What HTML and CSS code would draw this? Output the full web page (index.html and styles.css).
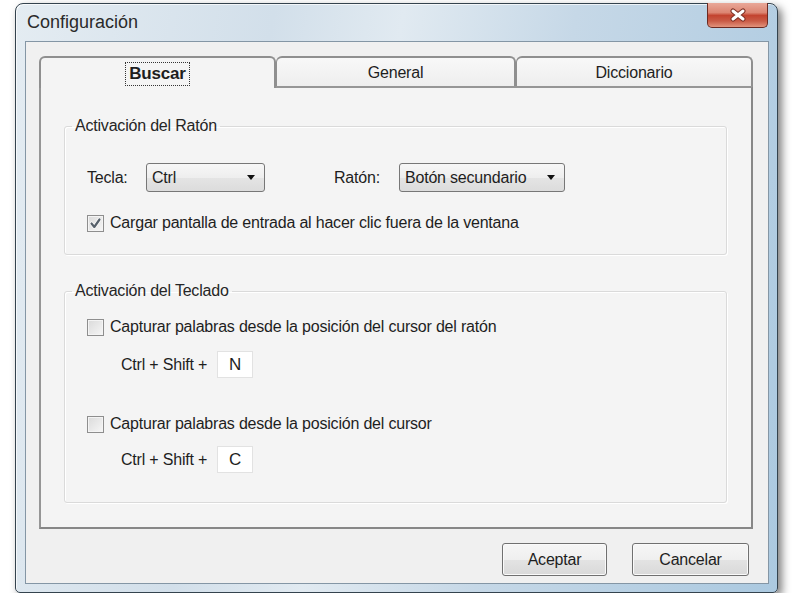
FILE: index.html
```html
<!DOCTYPE html>
<html lang="es">
<head>
    <meta charset="UTF-8">
    <meta name="viewport" content="width=device-width, initial-scale=1.0">
    <title>Configuración</title>
    <link rel="stylesheet" href="styles.css">
</head>
<body>
    <div class="window">
        <div class="titlebar">
            <span class="title">Configuración</span>
            <button class="close-btn" aria-label="Cerrar">
                <svg width="20" height="14" viewBox="-10 -7 20 14">
                    <path d="M-5 -4 L5 4 M5 -4 L-5 4" stroke="#7d3024" stroke-width="5" stroke-linecap="round"/>
                    <path d="M-5 -4 L5 4 M5 -4 L-5 4" stroke="#ffffff" stroke-width="3" stroke-linecap="round"/>
                </svg>
            </button>
        </div>
        <div class="client">
            <div class="tabs">
                <div class="tab active"><span class="focus">Buscar</span></div>
                <div class="tab tab-general">General</div>
                <div class="tab tab-dict">Diccionario</div>
            </div>
            <div class="tab-panel">
                <fieldset class="group">
                    <legend>Activación del Ratón</legend>
                    <div class="group-body mouse-body">
                        <div class="combo-row">
                            <label class="combo-label label-key">Tecla:</label>
                            <div class="combo combo-key"><span>Ctrl</span><i class="arrow"></i></div>
                            <label class="combo-label label-mouse">Ratón:</label>
                            <div class="combo combo-mouse"><span>Botón secundario</span><i class="arrow"></i></div>
                        </div>
                        <div class="check-row first-check">
                            <span class="check">
                                <svg width="15" height="15" viewBox="0 0 15 15">
                                    <path d="M3.5 7.5 L6.3 11 L11.5 3.5" fill="none" stroke="#ffffff" stroke-width="3.6" stroke-linecap="round" stroke-linejoin="round"/>
                                    <path d="M3.5 7.5 L6.3 11 L11.5 3.5" fill="none" stroke="#56606a" stroke-width="2.2" stroke-linecap="round" stroke-linejoin="round"/>
                                </svg>
                            </span>
                            <span>Cargar pantalla de entrada al hacer clic fuera de la ventana</span>
                        </div>
                    </div>
                </fieldset>

                <fieldset class="group group-keyboard">
                    <legend>Activación del Teclado</legend>
                    <div class="group-body keyboard-body">
                        <div class="check-row">
                            <span class="check"></span>
                            <span>Capturar palabras desde la posición del cursor del ratón</span>
                        </div>
                        <div class="key-row">
                            <span>Ctrl + Shift +</span>
                            <span class="key-box">N</span>
                        </div>
                        <div class="check-row second-check">
                            <span class="check"></span>
                            <span>Capturar palabras desde la posición del cursor</span>
                        </div>
                        <div class="key-row last-key">
                            <span>Ctrl + Shift +</span>
                            <span class="key-box">C</span>
                        </div>
                    </div>
                </fieldset>
            </div>
            <div class="buttons">
                <button class="btn btn-ok">Aceptar</button>
                <button class="btn btn-cancel">Cancelar</button>
            </div>
        </div>
    </div>
</body>
</html>
```

FILE: styles.css
```css
body {
    margin: 0;
    background-color: #ffffff;
    font-family: 'Liberation Sans', Arial, sans-serif;
    font-size: 16px;
    letter-spacing: -0.2px;
    color: #1e1e1e;
}
.window {
    position: relative;
    box-sizing: border-box;
    width: 763px;
    height: 590px;
    margin: 3px 0 0 15px;
    padding: 0 8px 8px 9px;
    border: 1px solid #34434e;
    border-radius: 8px 8px 5px 5px;
    background: linear-gradient(100deg, #e4ecf2 0%, #d2dfea 30%, #e1eaf1 45%, #c6d8e7 65%, #abc9e0 100%);
    box-shadow: 4px 4px 9px rgba(0, 0, 0, 0.5), inset 1px 1px 0 rgba(255, 255, 255, 0.7);
    display: flex;
    flex-direction: column;
}
.titlebar {
    height: 37px;
    display: flex;
    align-items: center;
    padding-left: 2px;
}
.title {
    font-size: 18px;
    letter-spacing: 0;
    color: #2a2a2a;
}
.close-btn {
    position: absolute;
    top: -1px;
    right: 9px;
    width: 61px;
    height: 25px;
    padding: 0;
    border: 1px solid #6b2a22;
    border-top: none;
    border-radius: 0 0 5px 5px;
    background: linear-gradient(#e9a899 0%, #dc8572 40%, #c3432f 52%, #c95b46 75%, #e2937c 100%);
    display: flex;
    align-items: center;
    justify-content: center;
}
.client {
    flex: 1;
    border: 1px solid #8496a5;
    background-color: #f0f0f0;
    padding: 14px 15px 0 13px;
    display: flex;
    flex-direction: column;
}
.tabs {
    display: flex;
    height: 30px;
}
.tab {
    box-sizing: border-box;
    height: 30px;
    border: 2px solid #8f8f8f;
    border-bottom: none;
    border-radius: 6px 6px 0 0;
    background: linear-gradient(#f8f8f8, #eeeeee);
    display: flex;
    align-items: center;
    justify-content: center;
    padding-top: 2px;
}
.tab.active {
    width: 237px;
    height: 32px;
    margin-bottom: -2px;
    position: relative;
    z-index: 1;
    background: #f4f4f4;
}
.tab-general {
    width: 240px;
    border-left-width: 1px;
}
.tab-dict {
    width: 237px;
    border-left-width: 1px;
}
.focus {
    font-weight: bold;
    font-size: 17px;
    padding: 0 2px;
    outline: 1px dotted #333333;
    outline-offset: 1px;
}
.tab-panel {
    box-sizing: border-box;
    width: 714px;
    height: 443px;
    border: 2px solid #969696;
    border-right-color: #878787;
    border-bottom-color: #878787;
    background-color: #f4f4f4;
    padding: 29px 24px 0 23px;
}
.group {
    margin: 0;
    padding: 0;
    border: 1px solid #dadada;
    border-radius: 3px;
    box-shadow: inset 1px 1px 0 #ffffff, 1px 1px 0 #ffffff;
    min-inline-size: auto;
}
.group legend {
    margin-left: 7px;
    padding: 0 3px;
    line-height: 18px;
    color: #262626;
}
.group-keyboard {
    margin-top: 27px;
}
.group-body {
    padding-left: 22px;
}
.mouse-body {
    padding-top: 28px;
    padding-bottom: 21px;
}
.keyboard-body {
    padding-top: 17px;
    padding-bottom: 29px;
}
.combo-row {
    display: flex;
    align-items: center;
    height: 29px;
}
.label-key {
    width: 59px;
}
.label-mouse {
    width: 65px;
    margin-left: 69px;
}
.combo {
    box-sizing: border-box;
    height: 29px;
    border: 1px solid #777777;
    border-radius: 3px;
    background: linear-gradient(#f7f7f7 0%, #eeeeee 50%, #e4e4e4 52%, #dcdcdc 100%);
    display: flex;
    align-items: center;
    justify-content: space-between;
    padding: 0 9px 0 5px;
}
.combo-key {
    width: 119px;
}
.combo-mouse {
    width: 166px;
}
.arrow {
    width: 0;
    height: 0;
    border-left: 4.5px solid transparent;
    border-right: 4.5px solid transparent;
    border-top: 5px solid #111111;
}
.check-row {
    display: flex;
    align-items: center;
    height: 20px;
}
.first-check {
    margin-top: 21px;
}
.second-check {
    margin-top: 36px;
}
.check {
    box-sizing: border-box;
    width: 17px;
    height: 17px;
    margin-right: 6px;
    border: 1px solid #8e8e8e;
    background: linear-gradient(135deg, #dadada, #f6f6f6);
    box-shadow: inset 0 0 0 1px #f4f4f4;
    display: flex;
    align-items: center;
    justify-content: center;
}
.key-row {
    display: flex;
    align-items: center;
    height: 27px;
    margin-top: 14px;
    padding-left: 34px;
}
.last-key {
    margin-top: 12px;
}
.key-box {
    box-sizing: border-box;
    width: 36px;
    height: 27px;
    margin-left: 10px;
    border: 1px solid #e2e2e2;
    background-color: #ffffff;
    display: flex;
    align-items: center;
    justify-content: center;
    font-size: 17px;
}
.buttons {
    display: flex;
    justify-content: flex-end;
    gap: 25px;
    margin-top: 14px;
    padding-right: 4px;
}
.btn {
    height: 33px;
    border: 1px solid #707070;
    border-radius: 3px;
    background: linear-gradient(#f6f6f6 0%, #efefef 50%, #e3e3e3 52%, #d9d9d9 100%);
    font-family: 'Liberation Sans', Arial, sans-serif;
    font-size: 16px;
    letter-spacing: -0.2px;
    color: #1e1e1e;
    box-shadow: inset 0 0 0 1px #fafafa;
}
.btn-ok {
    width: 105px;
}
.btn-cancel {
    width: 117px;
}
```
